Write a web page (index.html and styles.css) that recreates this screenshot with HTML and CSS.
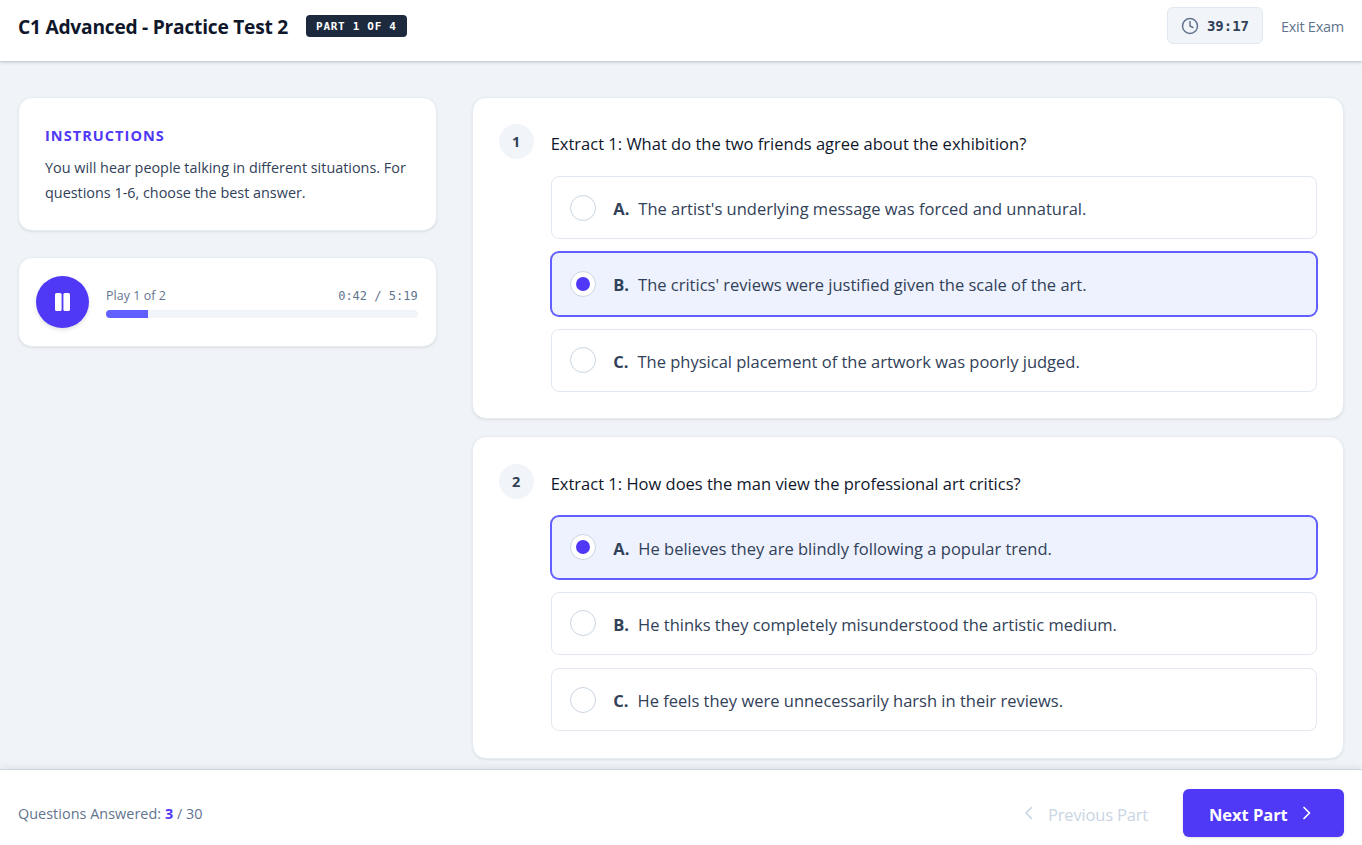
FILE: index.html
```html
<!DOCTYPE html>
<html lang="en">
<head>
  <meta charset="UTF-8" />
  <title>C1 Advanced - Practice Test 2</title>
  <link rel="stylesheet" href="styles.css">
</head>
<body>
  <header class="topbar">
    <div class="topbar-left">
      <h1 class="title">C1 Advanced - Practice Test 2</h1>
      <span class="part-badge">PART 1 OF 4</span>
    </div>
    <div class="topbar-right">
      <div class="timer">
        <svg class="clock" viewBox="0 0 24 24"><circle cx="12" cy="12" r="10"/><path d="M12 6v6l4 2"/></svg>
        <span class="timer-text">39:17</span>
      </div>
      <a class="exit">Exit Exam</a>
    </div>
  </header>

  <main class="content">
    <aside class="sidebar">
      <section class="card instructions">
        <h2 class="instructions-title">INSTRUCTIONS</h2>
        <p class="instructions-text">You will hear people talking in different situations. For<br/>questions 1-6, choose the best answer.</p>
      </section>

      <section class="card player">
        <button class="play-btn">
          <svg class="pause" viewBox="0 0 15 18"><rect x="0" y="0" width="6.6" height="18" rx="1.6"/><rect x="8.4" y="0" width="6.6" height="18" rx="1.6"/></svg>
        </button>
        <div class="track">
          <div class="track-info">
            <span class="play-count">Play 1 of 2</span>
            <span class="play-time">0:42 / 5:19</span>
          </div>
          <div class="progress"><div class="progress-fill" style="width: 13.5%"></div></div>
        </div>
      </section>
    </aside>

    <div class="questions">
      <section class="card question">
        <div class="number">1</div>
        <div class="question-body">
          <p class="prompt">Extract 1: What do the two friends agree about the exhibition?</p>
          <div class="options">
            <label class="option"><span class="radio"></span><b class="letter">A.</b><span class="answer">The artist's underlying message was forced and unnatural.</span></label>
            <label class="option selected"><span class="radio"></span><b class="letter">B.</b><span class="answer">The critics' reviews were justified given the scale of the art.</span></label>
            <label class="option"><span class="radio"></span><b class="letter">C.</b><span class="answer">The physical placement of the artwork was poorly judged.</span></label>
          </div>
        </div>
      </section>

      <section class="card question">
        <div class="number">2</div>
        <div class="question-body">
          <p class="prompt">Extract 1: How does the man view the professional art critics?</p>
          <div class="options">
            <label class="option selected"><span class="radio"></span><b class="letter">A.</b><span class="answer">He believes they are blindly following a popular trend.</span></label>
            <label class="option"><span class="radio"></span><b class="letter">B.</b><span class="answer">He thinks they completely misunderstood the artistic medium.</span></label>
            <label class="option"><span class="radio"></span><b class="letter">C.</b><span class="answer">He feels they were unnecessarily harsh in their reviews.</span></label>
          </div>
        </div>
      </section>
    </div>
  </main>

  <footer class="bottombar">
    <div class="answered">Questions Answered: <b>3</b> / 30</div>
    <div class="nav">
      <button class="prev" disabled>
        <svg class="chevron" viewBox="0 0 10 14"><path d="M7.5 1.5L2 7l5.5 5.5"/></svg>
        <span>Previous Part</span>
      </button>
      <button class="next">
        <span>Next Part</span>
        <svg class="chevron" viewBox="0 0 10 14"><path d="M2 1.5L7.5 7L2 12.5"/></svg>
      </button>
    </div>
  </footer>
</body>
</html>
```
FILE: styles.css
```css
* {
  box-sizing: border-box;
}
body {
  margin: 0;
  height: 845px;
  display: flex;
  flex-direction: column;
  overflow: hidden;
  background: #f0f4f8;
  color: #0f172b;
  font-family: "Segoe UI", "Open Sans", "Noto Sans", sans-serif;
}
h1, h2, p {
  margin: 0;
}
button {
  border: none;
  background: none;
  padding: 0;
  font-family: inherit;
}
svg {
  display: block;
  flex: none;
  fill: none;
  stroke: currentColor;
  stroke-linecap: round;
  stroke-linejoin: round;
}

/* header */
.topbar {
  flex: none;
  height: 62px;
  padding: 7px 18px 17px;
  display: flex;
  justify-content: space-between;
  align-items: center;
  background: #fff;
  border-bottom: 1px solid #cad5e2;
  box-shadow: 0 1px 3px rgba(0,0,0,0.1), 0 1px 2px -1px rgba(0,0,0,0.1);
}
.topbar-left,
.topbar-right {
  display: flex;
  align-items: center;
  gap: 18px;
}
.title {
  font-size: 19.2px;
  font-weight: 700;
  line-height: 28px;
  letter-spacing: -0.24px;
  white-space: nowrap;
  padding-top: 2px;
}
.part-badge {
  height: 22px;
  padding: 0 10px;
  border-radius: 4px;
  background: #1d293d;
  color: #fff;
  font: 700 11px/24px "DejaVu Sans Mono", monospace;
  letter-spacing: 0.7px;
}
.timer {
  width: 96px;
  height: 37px;
  padding-left: 13px;
  display: flex;
  align-items: center;
  gap: 8px;
  border: 1px solid #e2e8f0;
  border-radius: 6px;
  background: #f1f5f9;
}
.clock {
  width: 18px;
  height: 18px;
  color: #62748e;
  stroke-width: 2;
}
.timer-text {
  color: #314158;
  font: 700 14px/20px "DejaVu Sans Mono", monospace;
}
.exit {
  color: #62748e;
  font-size: 14.5px;
  letter-spacing: -0.25px;
  padding-top: 1px;
}

/* layout */
.content {
  flex: 1;
  min-height: 0;
  padding: 35px 18px 0;
  display: grid;
  grid-template-columns: repeat(3, 1fr);
  gap: 35px;
  align-items: start;
}
.sidebar {
  display: flex;
  flex-direction: column;
  gap: 26px;
}
.questions {
  grid-column: span 2;
  display: flex;
  flex-direction: column;
  gap: 17.2px;
}
.card {
  background: #fff;
  border: 1px solid #e6ecf2;
  border-radius: 14px;
  box-shadow: 0 1px 3px rgba(0,0,0,0.07), 0 1px 2px -1px rgba(0,0,0,0.07);
}

/* instructions */
.instructions {
  height: 134px;
  padding: 26px;
}
.instructions-title {
  color: #4f39f6;
  font-size: 14.5px;
  line-height: 24px;
  letter-spacing: 1.05px;
}
.instructions-text {
  margin-top: 7px;
  color: #314158;
  font-size: 14.4px;
  line-height: 25px;
  white-space: nowrap;
}

/* audio player */
.player {
  height: 90px;
  padding: 0 18px 0 17px;
  display: flex;
  align-items: center;
  gap: 17px;
}
.play-btn {
  width: 53px;
  height: 52px;
  flex: none;
  display: flex;
  align-items: center;
  justify-content: center;
  margin-bottom: 1px;
  border-radius: 50%;
  background: #4f39f6;
  color: #fff;
  box-shadow: 0 2px 4px rgba(0,0,0,0.12);
}
.pause {
  width: 15px;
  height: 18px;
  fill: currentColor;
  stroke: none;
}
.track {
  flex: 1;
}
.track-info {
  display: flex;
  justify-content: space-between;
  align-items: center;
  margin-bottom: 5px;
  color: #62748e;
  line-height: 18px;
}
.play-count {
  font-size: 12.4px;
  letter-spacing: 0.08px;
}
.play-time {
  font-family: "DejaVu Sans Mono", monospace;
  font-size: 12px;
}
.progress {
  height: 8px;
  border-radius: 4px;
  background: #f1f5f9;
  overflow: hidden;
}
.progress-fill {
  height: 100%;
  background: #615fff;
}

/* questions */
.question {
  padding: 26.4px 26px;
  display: flex;
  gap: 17px;
}
.number {
  width: 35px;
  height: 35px;
  flex: none;
  border-radius: 50%;
  background: #f1f5f9;
  color: #314158;
  font-size: 14.5px;
  font-weight: 700;
  line-height: 36px;
  text-align: center;
}
.question-body {
  flex: 1;
}
.prompt {
  padding-top: 6px;
  margin-bottom: 17.8px;
  font-size: 16.5px;
  line-height: 28px;
  white-space: nowrap;
}
.options {
  display: flex;
  flex-direction: column;
  gap: 13.2px;
}
.option {
  height: 63.1px;
  padding: 0 18px;
  display: flex;
  align-items: center;
  border: 1px solid #e2e8f0;
  border-radius: 8px;
  color: #314158;
  font-size: 16.5px;
  white-space: nowrap;
}
.option.selected {
  background: #eef2ff;
  border-color: #615fff;
  box-shadow: 0 0 0 1px #615fff;
}
.radio {
  width: 26px;
  height: 26px;
  flex: none;
  margin-right: 17.6px;
  display: flex;
  align-items: center;
  justify-content: center;
  border: 1px solid #cad5e2;
  border-radius: 50%;
  background: #fff;
}
.selected .radio::after {
  content: "";
  width: 14px;
  height: 14px;
  border-radius: 50%;
  background: #4f39f6;
}
.letter {
  margin-right: 9px;
  padding-top: 1.7px;
}
.answer {
  padding-top: 1.7px;
}

/* footer */
.bottombar {
  flex: none;
  height: 76px;
  padding: 19px 18px 8px;
  display: flex;
  justify-content: space-between;
  align-items: center;
  background: #fff;
  border-top: 1px solid #cad5e2;
  box-shadow: 0 -4px 6px -1px rgba(0,0,0,0.06);
}
.answered {
  color: #62748e;
  font-size: 14.4px;
  letter-spacing: 0.04px;
}
.answered b {
  color: #4f39f6;
}
.nav {
  display: flex;
  align-items: center;
  gap: 35px;
}
.prev,
.next {
  height: 48px;
  display: flex;
  align-items: center;
  font-size: 16.5px;
}
.prev {
  gap: 14px;
  color: #cad5e2;
  letter-spacing: -0.17px;
}
.next {
  width: 161px;
  padding-left: 26px;
  gap: 14px;
  border-radius: 6px;
  background: #4f39f6;
  color: #fff;
  font-weight: 700;
  letter-spacing: -0.05px;
  box-shadow: 0 1px 3px rgba(0,0,0,0.12);
}
.prev span,
.next span {
  padding-top: 3px;
}
.chevron {
  width: 10px;
  height: 14px;
  stroke-width: 1.7;
}
```
